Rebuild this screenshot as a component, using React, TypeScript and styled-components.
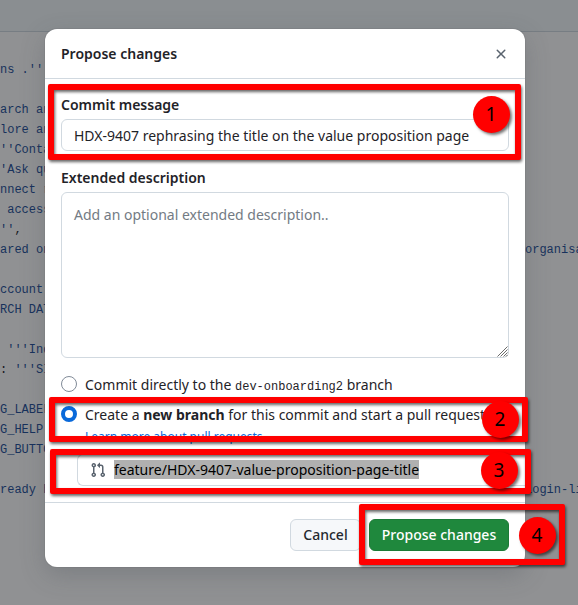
import React from 'react';
import styled, { createGlobalStyle } from 'styled-components';

const GlobalStyle = createGlobalStyle`
  *, *::before, *::after { box-sizing: border-box; }
  body {
    margin: 0;
    overflow: hidden;
    font-family: "Noto Sans", sans-serif;
    font-size: 14px;
    line-height: 20px;
    color: #1f2328;
    background: #909193;
  }
`;

const Page = styled.div`
  position: relative;
  width: 578px;
  height: 605px;
  overflow: hidden;
  display: grid;
`;

const Editor = styled.div`
  grid-area: 1 / 1;
  display: flex;
  flex-direction: column;
  min-width: 0;
`;

const EditorHeader = styled.div`
  height: 32px;
  flex: none;
  background: #8a8e91;
  border-bottom: 1px solid #777d83;
`;

const CodeArea = styled.div`
  padding-top: 28px;
  font-family: "Liberation Mono", monospace;
  font-size: 12px;
  line-height: 20px;
  color: #17315c;
`;

const CodeLine = styled.div`
  display: flex;
  justify-content: space-between;
  height: 20px;
  white-space: pre;
`;

const LineTail = styled.span`
  width: 53px;
  flex: none;
`;

const Punct = styled.span`
  color: #16191d;
`;

const Dialog = styled.section`
  grid-area: 1 / 1;
  position: relative;
  width: 480px;
  height: 538px;
  margin: 29px 0 0 45px;
  display: flex;
  flex-direction: column;
  background: #fff;
  border-radius: 12px;
  box-shadow: 0 0 0 1px rgba(31, 35, 40, 0.06), 0 8px 24px rgba(66, 74, 83, 0.26);
`;

const DialogHeader = styled.header`
  display: flex;
  align-items: center;
  justify-content: space-between;
  height: 50px;
  flex: none;
  padding: 0 16px;
  border-bottom: 1px solid #d1d9e0;
`;

const Title = styled.h1`
  margin: 0;
  font-size: 14px;
  line-height: 20px;
  font-weight: 600;
`;

const CloseButton = styled.button`
  display: flex;
  width: 16px;
  height: 16px;
  padding: 0;
  border: 0;
  background: none;
  color: #59636e;
`;

const DialogBody = styled.div`
  flex: 1;
  min-height: 0;
  display: flex;
  flex-direction: column;
  padding: 16px 16px 0;
`;

const Label = styled.label`
  font-weight: 600;
  line-height: 20px;
`;

const MessageInput = styled.input`
  height: 32px;
  flex: none;
  margin: 4px 0 17px;
  padding: 0 12px;
  border: 1px solid #d1d9e0;
  border-radius: 6px;
  font: inherit;
  color: #1f2328;
  background: #fff;
`;

const DescriptionField = styled.div`
  position: relative;
  display: flex;
  height: 166px;
  flex: none;
  margin: 4px 0 17px;
`;

const DescriptionInput = styled.textarea`
  flex: 1;
  padding: 12px;
  border: 1px solid #d1d9e0;
  border-radius: 6px;
  font: inherit;
  resize: none;
  background: #fff;
  &::placeholder { color: #737b84; }
`;

const ResizeGrip = styled.svg`
  position: absolute;
  right: 1px;
  bottom: 1px;
`;

const Option = styled.div`
  display: flex;
  gap: 8px;
  margin-bottom: 8px;
  white-space: nowrap;
`;

const Radio = styled.span<{ $checked?: boolean }>`
  width: 16px;
  height: 16px;
  flex: none;
  margin-top: 1px;
  border-radius: 50%;
  border: ${(p) => (p.$checked ? '4px solid #0969da' : '1px solid #818b98')};
  background: #fff;
`;

const BranchCode = styled.code`
  font-family: "Liberation Mono", monospace;
  font-size: 12px;
`;

const LearnMore = styled.a`
  display: block;
  font-size: 12px;
  line-height: 18px;
  margin-top: 3px;
  color: #0969da;
`;

const BranchField = styled.div`
  display: flex;
  align-items: center;
  gap: 8px;
  height: 32px;
  flex: none;
  margin: 0 -16px 0 16px;
  padding: 0 12px;
  border: 1px solid #d1d9e0;
  border-right: 0;
  border-radius: 6px 0 0 6px;
  color: #59636e;
`;

const Selected = styled.span`
  line-height: 19px;
  margin-bottom: 1px;
  color: #000;
  background: #b0b0b0;
`;

const DialogFooter = styled.footer`
  display: flex;
  justify-content: flex-end;
  gap: 8px;
  height: 65px;
  flex: none;
  padding: 16px;
  border-top: 1px solid #d1d9e0;
`;

const Button = styled.button<{ $primary?: boolean }>`
  height: 32px;
  width: ${(p) => (p.$primary ? 140 : 71)}px;
  padding: 0;
  border: 1px solid ${(p) => (p.$primary ? '#1c7a37' : '#d1d9e0')};
  border-radius: 6px;
  font: inherit;
  font-weight: 500;
  color: ${(p) => (p.$primary ? '#fff' : '#25292e')};
  background: ${(p) => (p.$primary ? '#1f883d' : '#f6f8fa')};
`;

const Highlight = styled.div<{ $x: number; $y: number; $w: number; $h: number }>`
  position: absolute;
  left: ${(p) => p.$x}px;
  top: ${(p) => p.$y}px;
  width: ${(p) => p.$w}px;
  height: ${(p) => p.$h}px;
  border: 6px solid #f00;
  border-radius: 2px;
  filter: drop-shadow(1px 2px 1.5px rgba(0, 0, 0, 0.6));
`;

const Marker = styled.div<{ $x: number; $y: number }>`
  position: absolute;
  left: ${(p) => p.$x}px;
  top: ${(p) => p.$y}px;
  width: 37px;
  height: 37px;
  display: flex;
  align-items: center;
  justify-content: center;
  border-radius: 50%;
  background: #f00;
  box-shadow: 2px 2px 3px rgba(0, 0, 0, 0.55);
  color: #000;
  font-size: 19px;
  line-height: 37px;
`;

const codeLines: { head: string; punct?: string; rest?: string; tail?: string }[] = [
  { head: "ns .''" },
  { head: '' },
  { head: 'arch and' },
  { head: 'lore and' },
  { head: "''Contact" },
  { head: "'Ask que" },
  { head: 'nnect re' },
  { head: ' access ' },
  { head: "''", punct: ',' },
  { head: 'ared on ', tail: 'organisa' },
  { head: '' },
  { head: 'ccount ' },
  { head: 'RCH DATA' },
  { head: '' },
  { head: " '''Indi" },
  { head: '', punct: ':', rest: " '''SIG" },
  { head: '' },
  { head: 'G_LABEL' },
  { head: 'G_HELP' },
  { head: 'G_BUTTON' },
  { head: '' },
  { head: 'ready ha', tail: 'login-li' },
];

const CloseIcon = () => (
  <svg width="16" height="16" viewBox="0 0 16 16" fill="currentColor">
    <path d="M3.72 3.72a.75.75 0 0 1 1.06 0L8 6.94l3.22-3.22a.749.749 0 0 1 1.275.326.749.749 0 0 1-.215.734L9.06 8l3.22 3.22a.749.749 0 0 1-.326 1.275.749.749 0 0 1-.734-.215L8 9.06l-3.22 3.22a.751.751 0 0 1-1.042-.018.751.751 0 0 1-.018-1.042L6.94 8 3.72 4.78a.75.75 0 0 1 0-1.06Z" />
  </svg>
);

const PullRequestIcon = () => (
  <svg width="16" height="16" viewBox="0 0 16 16" fill="currentColor">
    <path d="M1.5 3.25a2.25 2.25 0 1 1 3 2.122v5.256a2.251 2.251 0 1 1-1.5 0V5.372A2.25 2.25 0 0 1 1.5 3.25Zm5.677-.177L9.573.677A.25.25 0 0 1 10 .854V2.5h1A2.5 2.5 0 0 1 13.5 5v5.628a2.251 2.251 0 1 1-1.5 0V5a1 1 0 0 0-1-1h-1v1.646a.25.25 0 0 1-.427.177L7.177 3.427a.25.25 0 0 1 0-.354ZM3.75 2.5a.75.75 0 1 0 0 1.5.75.75 0 0 0 0-1.5Zm0 9.5a.75.75 0 1 0 0 1.5.75.75 0 0 0 0-1.5Zm8.25.75a.75.75 0 1 0 1.5 0 .75.75 0 0 0-1.5 0Z" />
  </svg>
);

export default function App() {
  return (
    <Page>
      <GlobalStyle />
      <Editor>
        <EditorHeader />
        <CodeArea>
          {codeLines.map((line, i) => (
            <CodeLine key={i}>
              <span>
                {line.head}
                {line.punct && <Punct>{line.punct}</Punct>}
                {line.rest}
              </span>
              {line.tail && <LineTail>{line.tail}</LineTail>}
            </CodeLine>
          ))}
        </CodeArea>
      </Editor>

      <Dialog>
        <DialogHeader>
          <Title>Propose changes</Title>
          <CloseButton aria-label="Close"><CloseIcon /></CloseButton>
        </DialogHeader>
        <DialogBody>
          <Label htmlFor="message">Commit message</Label>
          <MessageInput id="message" defaultValue="HDX-9407 rephrasing the title on the value proposition page" />
          <Label htmlFor="description">Extended description</Label>
          <DescriptionField>
            <DescriptionInput id="description" placeholder="Add an optional extended description.." />
            <ResizeGrip width="11" height="11" viewBox="0 0 11 11" fill="none" stroke="#6a6a6a" strokeWidth="1">
              <path d="M0.5 10.5l10-10M3.5 10.5l7-7M6.5 10.5l4-4M9 10.5l1.5-1.5" />
            </ResizeGrip>
          </DescriptionField>
          <Option>
            <Radio />
            <span>Commit directly to the <BranchCode>dev-onboarding2</BranchCode> branch</span>
          </Option>
          <Option>
            <Radio $checked />
            <span>
              Create a <b>new branch</b> for this commit and start a pull request.
              <LearnMore>Learn more about pull requests</LearnMore>
            </span>
          </Option>
          <BranchField>
            <PullRequestIcon />
            <Selected>feature/HDX-9407-value-proposition-page-title</Selected>
          </BranchField>
        </DialogBody>
        <DialogFooter>
          <Button>Cancel</Button>
          <Button $primary>Propose changes</Button>
        </DialogFooter>
      </Dialog>

      <Highlight $x={48} $y={84} $w={473} $h={76} />
      <Highlight $x={49} $y={397} $w={479} $h={45} />
      <Highlight $x={50} $y={449} $w={481} $h={45} />
      <Highlight $x={359} $y={504} $w={206} $h={61} />
      <Marker $x={472.5} $y={96}>1</Marker>
      <Marker $x={481.5} $y={400.5}>2</Marker>
      <Marker $x={480.5} $y={452}>3</Marker>
      <Marker $x={518.5} $y={517}>4</Marker>
    </Page>
  );
}
